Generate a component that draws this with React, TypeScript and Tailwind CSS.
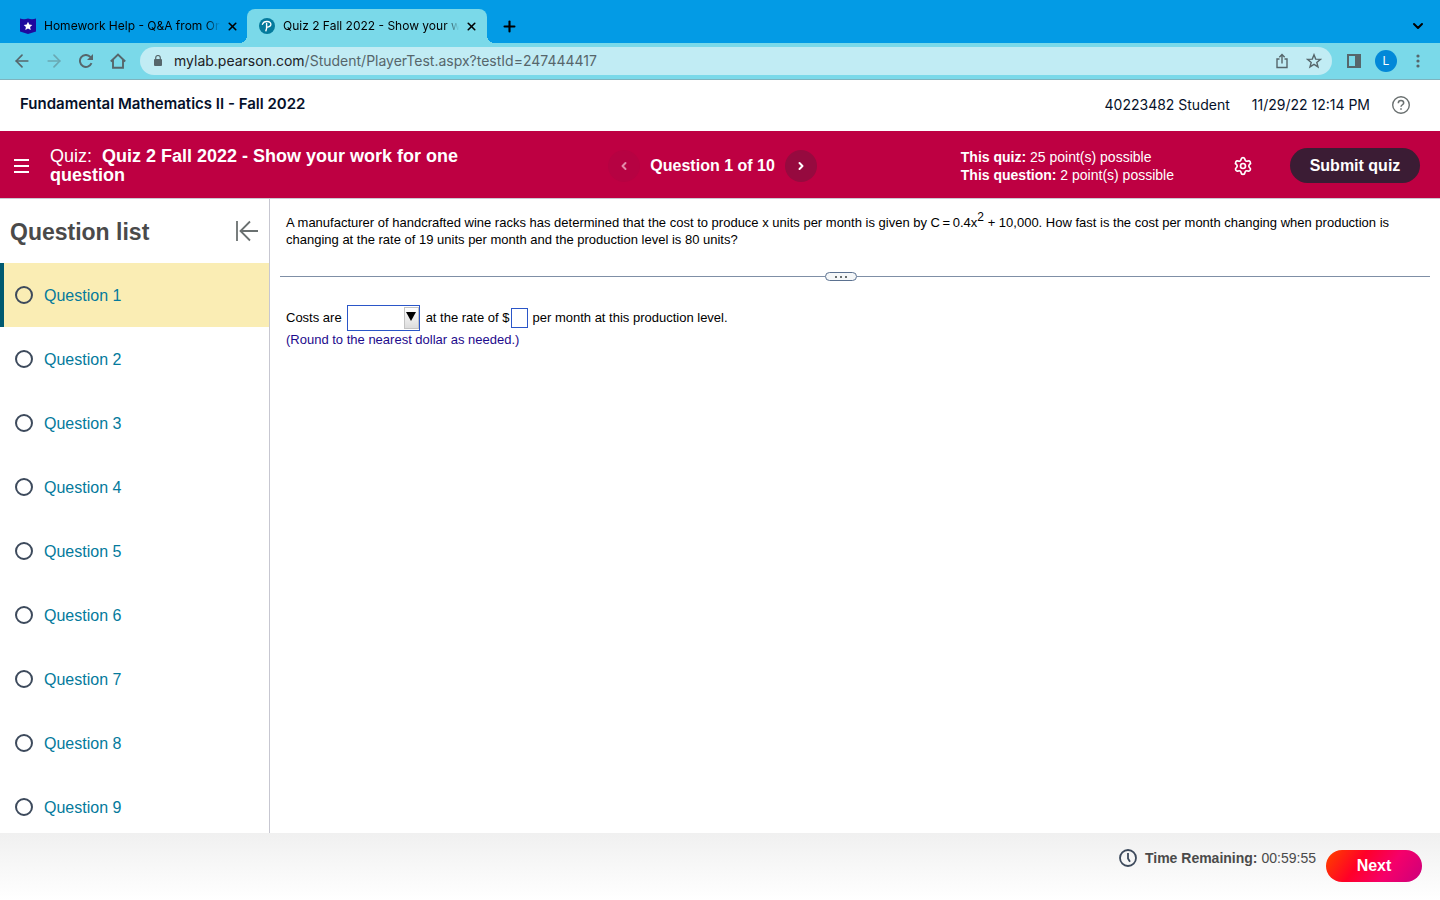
import { useState } from 'react'
import { ArrowLeft, ArrowRight, ChevronDown, ChevronLeft, ChevronRight, Plus, Settings, X } from 'lucide-react'

const questions = [1, 2, 3, 4, 5, 6, 7, 8, 9]

function StarBadge() {
    return (
        <svg width="16" height="16" viewBox="0 0 16 16" className="shrink-0">
            <path d="M0 0.5Q4 2 8 0.5Q12 2 16 0.5V13.5L8 16L0 13.5Z" fill="#1f0a9e" />
            <path d="M8 3.8l1.3 2.8 3 .4-2.2 2.1.6 3L8 10.6l-2.7 1.5.6-3L3.7 7l3-.4z" fill="#fff" />
        </svg>
    )
}

function PearsonLogo() {
    return (
        <svg width="16" height="16" viewBox="0 0 16 16" className="shrink-0">
            <circle cx="8" cy="8" r="8" fill="#047a9c" />
            <path
                d="M3.4 6.4C4.2 4.2 6.2 3.4 8.2 3.5C10.8 3.6 12 4.9 11.9 6.4C11.8 8.1 10 9.2 7.8 9"
                fill="none"
                stroke="#fff"
                strokeWidth="1.3"
                strokeLinecap="round"
            />
            <path d="M7.6 5.4V10.5L6.9 12.8" fill="none" stroke="#fff" strokeWidth="1.4" strokeLinecap="round" />
        </svg>
    )
}

function BrowserTabs() {
    return (
        <div className="flex h-[43px] items-end bg-[#039be5] text-xs text-black">
            <div className="flex h-[34px] w-[247px] items-center pl-5 pr-[7px]">
                <StarBadge />
                <span className="ml-2 mr-1 flex-1 overflow-hidden whitespace-nowrap [mask-image:linear-gradient(to_right,#000_92%,transparent)]">
                    Homework Help - Q&A from On
                </span>
                <button aria-label="Close Homework Help tab" className="flex size-4 items-center justify-center">
                    <X size={13} strokeWidth={3} />
                </button>
            </div>
            <div className="relative flex h-[34px] w-[240px] items-center rounded-t-lg bg-[#7ad9e9] pl-3 pr-2">
                <span className="absolute -left-2 bottom-0 size-2 bg-[radial-gradient(circle_at_top_left,#039be5_8px,#7ad9e9_8px)]" />
                <span className="absolute -right-2 bottom-0 size-2 bg-[radial-gradient(circle_at_top_right,#039be5_8px,#7ad9e9_8px)]" />
                <PearsonLogo />
                <span className="ml-2 mr-1 flex-1 overflow-hidden whitespace-nowrap [mask-image:linear-gradient(to_right,#000_92%,transparent)]">
                    Quiz 2 Fall 2022 - Show your w
                </span>
                <button aria-label="Close Quiz 2 tab" className="flex size-4 items-center justify-center">
                    <X size={13} strokeWidth={3} />
                </button>
            </div>
            <button aria-label="New tab" className="ml-3 flex h-[34px] w-5 items-center justify-center">
                <Plus size={17} strokeWidth={3} />
            </button>
            <button aria-label="Search tabs" className="ml-auto mr-[14px] flex h-[34px] w-4 items-center justify-center">
                <ChevronDown size={16} strokeWidth={3} />
            </button>
        </div>
    )
}

function Toolbar() {
    return (
        <div className="flex h-[37px] items-center border-b border-[#7fb3bd] bg-[#7ad9e9] text-[#56666b]">
            <div className="flex items-center gap-3 pl-3">
                <button aria-label="Back" className="flex size-5 items-center justify-center">
                    <ArrowLeft size={20} />
                </button>
                <button aria-label="Forward" className="flex size-5 items-center justify-center text-[#69a8b3]">
                    <ArrowRight size={20} />
                </button>
                <button aria-label="Reload" className="flex size-5 items-center justify-center">
                    <svg width="14" height="14" viewBox="0 0 14 14" fill="none">
                        <path d="M12.5 9.2A6 6 0 1 1 11.3 2.8L12.5 4" stroke="currentColor" strokeWidth="1.9" />
                        <path d="M14 0V6H8z" fill="currentColor" />
                    </svg>
                </button>
                <button aria-label="Home" className="flex size-5 items-center justify-center">
                    <svg width="16" height="16" viewBox="0 0 16 16" fill="none" stroke="currentColor" strokeWidth="1.9">
                        <path d="M0.8 8.5L8 1.5L15.2 8.5M3 7V14.8H13V7" />
                    </svg>
                </button>
            </div>
            <div className="ml-3 flex h-7 flex-1 items-center rounded-full bg-[#c1ecf4] pl-[13px] pr-[10px]">
                <svg width="10" height="12" viewBox="0 0 10 12" className="shrink-0">
                    <rect x="1" y="4" width="8" height="7" rx="1" fill="currentColor" />
                    <path d="M2.7 5V2.8a2.3 2.3 0 0 1 4.6 0v2" fill="none" stroke="currentColor" strokeWidth="1.2" />
                </svg>
                <span className="ml-[11px] flex-1 text-sm">
                    <span className="text-[#202124]">mylab.pearson.com</span>/Student/PlayerTest.aspx?testId=247444417
                </span>
                <button aria-label="Share this page">
                    <svg width="16" height="16" viewBox="0 0 16 16" fill="none" stroke="currentColor" strokeWidth="1.4">
                        <path d="M5.5 6H3v8.500h10V6h-2.500M8 10.500V2M5.300 4.200L8 1.500L10.700 4.200" />
                    </svg>
                </button>
                <button aria-label="Bookmark this page" className="ml-4">
                    <svg width="16" height="16" viewBox="0 0 16 16" fill="none" stroke="currentColor" strokeWidth="1.4">
                        <path d="M8 1.8l1.7 4.3 4.7.3-3.6 3 1.2 4.5L8 11.4 4 13.9l1.2-4.5-3.6-3 4.7-.3z" />
                    </svg>
                </button>
            </div>
            <button aria-label="Side panel" className="ml-[15px]">
                <svg width="14" height="14" viewBox="0 0 14 14">
                    <path d="M0 0h14v14H0zM2 2v10h6V2z" fill="currentColor" fillRule="evenodd" />
                </svg>
            </button>
            <button
                aria-label="Profile"
                className="ml-[14px] flex size-[22px] items-center justify-center rounded-full bg-[#0288d8] text-xs text-white"
            >
                L
            </button>
            <button aria-label="Browser menu" className="ml-[13px] mr-[14px]">
                <svg width="16" height="16" viewBox="0 0 16 16" fill="currentColor">
                    <circle cx="8" cy="3" r="1.6" />
                    <circle cx="8" cy="8" r="1.6" />
                    <circle cx="8" cy="13" r="1.6" />
                </svg>
            </button>
        </div>
    )
}

function CourseHeader() {
    return (
        <header className="flex h-[51px] items-center bg-white px-5 pb-0.5 font-[Inter,sans-serif] text-[#05112a]">
            <h1 className="flex-1 text-[15px] font-semibold">Fundamental Mathematics II - Fall 2022</h1>
            <div className="flex items-center gap-[22px] text-sm">
                <span>40223482 Student</span>
                <span>11/29/22 12:14 PM</span>
                <button aria-label="Help" className="mr-[10px]">
                    <svg width="18" height="18" viewBox="0 0 18 18" fill="none" stroke="#6a7070">
                        <circle cx="9" cy="9" r="8.3" strokeWidth="1.4" />
                        <path d="M6.3 7.2C6.3 5.6 7.5 4.6 9 4.6S11.7 5.5 11.7 6.9C11.7 8.7 9 8.8 9 10.8" strokeWidth="1.5" />
                        <path d="M9 12.2v1.5" strokeWidth="1.6" />
                    </svg>
                </button>
            </div>
        </header>
    )
}

function QuizBar() {
    return (
        <div className="flex h-[68px] items-center border-b border-[#c9c9d1] bg-[#be0042] pr-5 pt-0.5 text-white">
            <button aria-label="Open menu" className="flex w-[50px] shrink-0 pl-[14px]">
                <svg width="15" height="14" viewBox="0 0 15 14" fill="currentColor">
                    <path d="M0 0h15v2H0zM0 6h15v2H0zM0 12h15v2H0z" />
                </svg>
            </button>
            <div className="flex-1">
                <h2 className="max-w-[440px] text-lg leading-[19px]">
                    Quiz:&nbsp; <b>Quiz 2 Fall 2022 - Show your work for one question</b>
                </h2>
            </div>
            <div className="mr-36 flex items-center gap-[10px]">
                <button
                    aria-label="Previous question"
                    disabled
                    className="flex size-8 items-center justify-center rounded-full bg-[#b60242] text-[#e28ba9]"
                >
                    <ChevronLeft size={12} strokeWidth={4} />
                </button>
                <span className="text-base font-bold">Question 1 of 10</span>
                <button
                    aria-label="Next question"
                    className="flex size-8 items-center justify-center rounded-full bg-[#960a3f]"
                >
                    <ChevronRight size={12} strokeWidth={4} />
                </button>
            </div>
            <div className="text-sm leading-[18px]">
                <p>
                    <b>This quiz:</b> 25 point(s) possible
                </p>
                <p>
                    <b>This question:</b> 2 point(s) possible
                </p>
            </div>
            <button aria-label="Settings" className="ml-[59px]">
                <Settings size={20} />
            </button>
            <button className="ml-[37px] h-[35px] w-[130px] rounded-full bg-[#3b1c34] text-base font-bold">
                Submit quiz
            </button>
        </div>
    )
}

function QuestionList({ active, onSelect }: { active: number; onSelect: (n: number) => void }) {
    return (
        <aside className="flex w-[270px] shrink-0 flex-col overflow-hidden border-r border-[#c7c7d1]">
            <div className="flex h-16 shrink-0 items-center justify-between px-[10px]">
                <h2 className="pt-0.5 text-[23px] font-bold text-[#4a4a4a]">Question list</h2>
                <button aria-label="Collapse question list">
                    <svg width="24" height="22" viewBox="0 0 24 22" fill="none" stroke="#6a7070" strokeWidth="1.8">
                        <path d="M2 1v20M23 11H6M15 1.500L5.500 11L15 20.500" />
                    </svg>
                </button>
            </div>
            <ul>
                {questions.map((n) => (
                    <li key={n}>
                        <button
                            onClick={() => onSelect(n)}
                            className={`flex h-16 w-full items-center gap-[11px] border-l-4 pl-[11px] text-base text-[#047a9c] ${
                                n === active ? 'border-[#005a70] bg-[#faedb4]' : 'border-transparent'
                            }`}
                        >
                            <span className="size-[18px] rounded-full border-2 border-[#3d4a5c]" />
                            <span className="pt-0.5">Question {n}</span>
                        </button>
                    </li>
                ))}
            </ul>
        </aside>
    )
}

function Problem() {
    return (
        <main className="flex-1 px-[10px] pt-[15px] text-[13px] leading-[17px] text-black">
            <p className="px-[6px]">
                A manufacturer of handcrafted wine racks has determined that the cost to produce x units per month is given by
                C&thinsp;=&thinsp;0.4x<sup className="text-xs">2</sup> + 10,000. How fast is the cost per month changing when
                production is changing at the rate of 19 units per month and the production level is 80 units?
            </p>
            <div className="mt-6 flex items-center">
                <hr className="flex-[19] border-[#7f8fa6]" />
                <button
                    aria-label="Resize panes"
                    className="flex h-[9px] w-8 items-center justify-center gap-[3px] rounded-full border border-[#5b7190] bg-[#f5f7f8]"
                >
                    <span className="size-[2px] bg-[#6a7070]" />
                    <span className="size-[2px] bg-[#6a7070]" />
                    <span className="size-[2px] bg-[#6a7070]" />
                </button>
                <hr className="flex-[20] border-[#7f8fa6]" />
            </div>
            <div className="mt-6 flex items-center px-[6px]">
                <label htmlFor="trend" className="pb-0.5">
                    Costs are
                </label>
                <div className="relative ml-[5px] mr-[6px]">
                    <select
                        id="trend"
                        className="block h-[26px] w-[73px] appearance-none border border-[#2b56c8] bg-white pl-1"
                    />
                    <span className="pointer-events-none absolute bottom-[2px] right-px top-[2px] flex w-[15px] justify-center border border-[#c3c3c3] bg-linear-to-b from-white to-[#dcdcdc] pt-1">
                        <svg width="10" height="9" viewBox="0 0 10 9" className="shrink-0">
                            <path d="M0 0h10L5 9z" />
                        </svg>
                    </span>
                </div>
                <label htmlFor="rate" className="pb-0.5">
                    at the rate of $
                </label>
                <input id="rate" className="ml-0.5 mr-1 h-5 w-[17px] border border-[#2b56c8] px-px" />
                <span className="pb-0.5">per month at this production level.</span>
            </div>
            <p className="px-[6px] text-[#1d0a8c]">(Round to the nearest dollar as needed.)</p>
        </main>
    )
}

function Footer() {
    return (
        <footer className="flex h-[67px] shrink-0 items-center justify-end bg-linear-to-b from-[#f0f0f0] to-white pb-0.5 pr-[18px] text-sm text-[#4a4a4a]">
            <div className="mb-4 flex items-center">
                <svg width="18" height="18" viewBox="0 0 18 18" fill="none" stroke="#3d4a5c" strokeWidth="1.8">
                    <circle cx="9" cy="9" r="8" />
                    <path d="M9 4v5.500l2 3.200" />
                </svg>
                <b className="ml-2 mr-1">Time Remaining:</b> 00:59:55
            </div>
            <button className="ml-[10px] h-8 w-24 rounded-full bg-[linear-gradient(125deg,#ff3a00_5%,#ff0028_35%,#f5006a_65%,#cc007c)] text-base font-bold text-white">
                Next
            </button>
        </footer>
    )
}

export default function App() {
    const [active, setActive] = useState(1)

    return (
        <div className="flex h-screen flex-col overflow-hidden bg-white font-['Liberation_Sans',Arial,sans-serif]">
            <div className="shrink-0 font-[Inter,sans-serif]">
                <BrowserTabs />
                <Toolbar />
            </div>
            <div className="shrink-0">
                <CourseHeader />
                <QuizBar />
            </div>
            <div className="flex min-h-0 flex-1">
                <QuestionList active={active} onSelect={setActive} />
                <Problem />
            </div>
            <Footer />
        </div>
    )
}
